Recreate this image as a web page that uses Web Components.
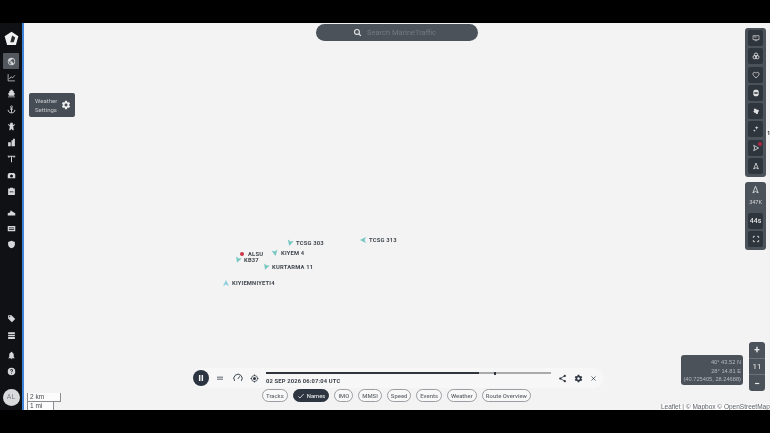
<!DOCTYPE html>
<html>
<head>
<meta charset="utf-8">
<title>MarineTraffic</title>
<style>
  html, body { margin: 0; padding: 0; background: #000; overflow: hidden; }
  body { font-family: Roboto, "Liberation Sans", sans-serif; }
</style>
</head>
<body>
<mt-app></mt-app>
<script>
const ICONS = {
  logo: '<path d="M12 1 23 8.500 19 22.500H5L1 8.500z" fill="currentColor"/><path d="M13 7 18 10.500 15.500 18H10z" fill="#2a2c30"/>',
  globe: '<path fill="currentColor" d="M12 2C6.48 2 2 6.48 2 12s4.48 10 10 10 10-4.48 10-10S17.52 2 12 2zm-1 17.93c-3.95-.49-7-3.85-7-7.93 0-.62.08-1.21.21-1.79L9 15v1c0 1.1.9 2 2 2v1.93zm6.9-2.54c-.26-.81-1-1.39-1.9-1.39h-1v-3c0-.55-.45-1-1-1H8v-2h2c.55 0 1-.45 1-1V7h2c1.1 0 2-.9 2-2v-.41c2.93 1.19 5 4.06 5 7.41 0 2.08-.8 3.97-2.1 5.39z"/>',
  chart: '<path fill="none" stroke="currentColor" stroke-width="2" d="M3 3v18h18M6 16l5-6 4 3 6-7"/>',
  boat: '<path fill="currentColor" d="M9 2h6v3h3v5l3 1-2 7H5l-2-7 3-1V5h3zM3 20h18v2H3z"/>',
  anchor: '<path fill="none" stroke="currentColor" stroke-width="2.400" d="M12 7v14M8 11h8M3 13c0 5 4 8 9 8s9-3 9-8"/><circle cx="12" cy="5" r="2.600" fill="none" stroke="currentColor" stroke-width="2"/>',
  tower: '<path fill="currentColor" d="M9 2h6l1 6 5-3v3l-4.500 3L18 22h-3l-3-4-3 4H6l1.500-11L3 8V5l5 3z"/>',
  port: '<path fill="currentColor" d="M3 11h7v11H3zM12 6h4V2h5v20h-9z"/>',
  antenna: '<path fill="none" stroke="currentColor" stroke-width="2.600" d="M2 6h20M12 6v16M5 6v4M19 6v4"/>',
  cam: '<path fill="currentColor" d="M5 5h14l3 4v10H2V9zm7 4a4 4 0 1 0 0 8 4 4 0 0 0 0-8z"/>',
  album: '<path fill="currentColor" d="M3 4h18v17H3zM8 2h8v3H8z"/><path fill="#101114" d="M7 12h10v2H7z"/>',
  land: '<path fill="currentColor" d="M2 20v-6l6-2 2-6 4 3 8 5v6z"/>',
  card: '<path fill="currentColor" fill-rule="evenodd" d="M2 5h20v14H2zM5 9v2h14V9zm0 4v2h14v-2z"/>',
  shield: '<path fill="currentColor" d="M12 2l9 3v7c0 5-4 9-9 10-5-1-9-5-9-10V5z"/>',
  tag: '<path fill="currentColor" d="M3 3h9l10 10-9 9L3 12zm4 2.500a1.500 1.500 0 1 0 0 3 1.500 1.500 0 0 0 0-3z"/>',
  rows: '<path fill="currentColor" d="M3 3h18v5H3zM3 10h18v4H3zM3 16h18v5H3z"/>',
  bell: '<path fill="currentColor" d="M12 2a2 2 0 0 1 2 2c3 1 4 4 4 7v5l3 3H3l3-3v-5c0-3 1-6 4-7a2 2 0 0 1 2-2zM10 20h4a2 2 0 0 1-4 0z"/>',
  help: '<path fill="currentColor" fill-rule="evenodd" d="M12 2a10 10 0 1 1 0 20 10 10 0 0 1 0-20zm-1 14v2h2v-2zm1-10c-2.200 0-4 1.500-4 3.500h2c0-1 .9-1.700 2-1.700s2 .6 2 1.500c0 1.800-3 1.600-3 5h2c0-2.400 3-2.700 3-5.200C16 7.500 14.200 6 12 6z"/>',
  gear: '<path fill="currentColor" d="M19.430 12.980c.04-.32.07-.64.07-.98s-.03-.66-.07-.98l2.110-1.650c.19-.15.24-.42.12-.64l-2-3.460c-.12-.22-.39-.3-.61-.22l-2.490 1c-.52-.4-1.080-.73-1.690-.98l-.38-2.650C14.460 2.180 14.250 2 14 2h-4c-.25 0-.46.18-.49.420l-.38 2.650c-.61.25-1.170.59-1.690.98l-2.490-1c-.23-.09-.49 0-.61.22l-2 3.460c-.13.22-.07.49.12.64l2.110 1.650c-.04.32-.07.65-.07.98s.03.66.07.98l-2.110 1.650c-.19.15-.24.42-.12.64l2 3.460c.12.22.39.3.61.22l2.490-1c.52.4 1.080.73 1.690.98l.38 2.650c.03.24.24.42.49.42h4c.25 0 .46-.18.49-.42l.38-2.650c.61-.25 1.170-.59 1.690-.98l2.490 1c.23.09.49 0 .61-.22l2-3.460c.12-.22.07-.49-.12-.64l-2.110-1.650zM12 15.500c-1.930 0-3.500-1.570-3.500-3.500s1.570-3.500 3.500-3.500 3.500 1.570 3.500 3.500-1.570 3.500-3.500 3.500z"/>',
  search: '<circle cx="10.500" cy="10.500" r="6.500" fill="none" stroke="currentColor" stroke-width="3"/><path d="M15.500 15.500 21 21" stroke="currentColor" stroke-width="3.400"/>',
  screen: '<path fill="none" stroke="currentColor" stroke-width="2" d="M3 5h18v12H3zM8 20h8"/><path fill="currentColor" d="M6 8h8v2H6z"/>',
  rings: '<g fill="none" stroke="currentColor" stroke-width="2.600"><circle cx="12" cy="8" r="5"/><circle cx="8" cy="15.500" r="5"/><circle cx="16" cy="15.500" r="5"/></g>',
  heart: '<path fill="none" stroke="currentColor" stroke-width="2.400" d="M12 20.500C5 15 3 12 3 8.500 3 6 5 4 7.500 4c1.800 0 3.500 1 4.500 2.700C13 5 14.700 4 16.500 4 19 4 21 6 21 8.500c0 3.500-2 6.500-9 12z"/>',
  pack: '<path fill="currentColor" fill-rule="evenodd" d="M8 2h8l4 4v12l-4 4H8l-4-4V6zm-1 7v2h10V9zm0 4v2h10v-2z"/>',
  wind: '<path fill="currentColor" d="M5 5h7l2 3h5l2 4-3 3v5l-5 1-3-4H7l-3-4 3-3z"/>',
  spark: '<path fill="currentColor" d="M14 3l1.500 4L20 8.500 15.500 10 14 14l-1.500-4L8 8.500 12.500 7zM7 13l1 3 3 1-3 1-1 3-1-3-3-1 3-1z"/>',
  play: '<path fill="none" stroke="currentColor" stroke-width="2.400" stroke-linejoin="round" d="M5 4l15 8-15 8 3-8z"/>',
  north: '<path fill="none" stroke="currentColor" stroke-width="2.400" stroke-linejoin="round" d="M12 3 5 21l7-4 7 4z"/>',
  full: '<path fill="none" stroke="currentColor" stroke-width="2.400" d="M4 9V4h5M15 4h5v5M20 15v5h-5M9 20H4v-5"/>',
  equals: '<path fill="currentColor" d="M3 8h18v2.600H3zM3 14h18v2.600H3z"/>',
  gauge: '<path fill="none" stroke="currentColor" stroke-width="2.200" d="M4 19a10 10 0 1 1 16 0M12 14l4-6"/>',
  target: '<circle cx="12" cy="12" r="8" fill="none" stroke="currentColor" stroke-width="2"/><circle cx="12" cy="12" r="4" fill="currentColor"/><path stroke="currentColor" stroke-width="2" d="M12 1v4M12 19v4M1 12h4M19 12h4"/>',
  share: '<path fill="none" stroke="currentColor" stroke-width="2.200" d="M18 5 6 12l12 7"/><circle cx="18" cy="5" r="3" fill="currentColor"/><circle cx="6" cy="12" r="3" fill="currentColor"/><circle cx="18" cy="19" r="3" fill="currentColor"/>',
  close: '<path stroke="currentColor" stroke-width="2.400" d="M5 5l14 14M19 5 5 19"/>',
  check: '<path fill="none" stroke="currentColor" stroke-width="2.600" d="M4 13l5 5L20 6"/>',
  pause: '<path fill="currentColor" d="M7 5h3.600v14H7zM13.400 5H17v14h-3.600z"/>'
};

class MtIcon extends HTMLElement {
  connectedCallback() {
    const size = this.getAttribute('size') || 9;
    this.attachShadow({mode: 'open'}).innerHTML = `
      <style>
        :host { display: inline-flex; align-items: center; justify-content: center; flex: none; }
        svg { display: block; }
      </style>
      <svg xmlns="http://www.w3.org/2000/svg" viewBox="0 0 24 24" width="${size}" height="${size}">${ICONS[this.getAttribute('name')] || ''}</svg>`;
  }
}

class MtNavItem extends HTMLElement {
  connectedCallback() {
    const active = this.hasAttribute('active');
    this.attachShadow({mode: 'open'}).innerHTML = `
      <style>
        :host { display: flex; align-items: center; justify-content: center; width: 16px; height: 16px; border-radius: 1px; color: #d6d7d9; background: ${active ? '#53585f' : 'transparent'}; }
      </style>
      <mt-icon name="${this.getAttribute('icon')}" size="9"></mt-icon>`;
  }
}

class MtSidebar extends HTMLElement {
  connectedCallback() {
    const item = (n, a) => `<mt-nav-item icon="${n}" ${a ? 'active' : ''}></mt-nav-item>`;
    this.attachShadow({mode: 'open'}).innerHTML = `
      <style>
        :host { display: flex; flex-direction: column; align-items: center; flex: none; width: 24px; padding-top: 7px; box-sizing: border-box; background: #101114; border-right: 2px solid #3f83d8; }
        .logo { color: #f2f2f2; height: 16px; margin-bottom: 7px; display: flex; }
        .group { display: flex; flex-direction: column; gap: .3px; align-items: center; }
        .g2 { margin-top: 5px; }
        .g3 { margin-top: 58px; }
        .g4 { margin-top: 4px; }
        .avatar { margin-top: 9px; width: 17px; height: 17px; border-radius: 50%; background: #d9dadc; color: #7b7f85; font-size: 7px; display: flex; align-items: center; justify-content: center; }
      </style>
      <div class="logo"><mt-icon name="logo" size="15"></mt-icon></div>
      <div class="group">${item('globe', 1)}${item('chart')}${item('boat')}${item('anchor')}${item('tower')}${item('port')}${item('antenna')}${item('cam')}${item('album')}</div>
      <div class="group g2">${item('land')}${item('card')}${item('shield')}</div>
      <div class="group g3">${item('tag')}${item('rows')}</div>
      <div class="group g4">${item('bell')}${item('help')}</div>
      <div class="avatar">AL</div>`;
  }
}

class MtSearch extends HTMLElement {
  connectedCallback() {
    this.attachShadow({mode: 'open'}).innerHTML = `
      <style>
        :host { position: absolute; left: 292px; top: 1px; width: 162px; height: 17px; box-sizing: border-box; padding-right: 5px; border-radius: 9px; background: #4b525a; display: flex; align-items: center; justify-content: center; gap: 5px; color: #747a81; font-size: 7.500px; }
        mt-icon { color: #e2e4e6; }
      </style>
      <mt-icon name="search" size="9"></mt-icon><span>Search MarineTraffic</span>`;
  }
}

class MtTip extends HTMLElement {
  connectedCallback() {
    this.attachShadow({mode: 'open'}).innerHTML = `
      <style>
        :host { position: absolute; left: 5px; top: 70px; width: 46px; height: 24px; box-sizing: border-box; padding: 0 4px 0 6px; border-radius: 2px; background: #474d55; color: #c6c9cc; font-size: 6px; line-height: 9px; display: flex; align-items: center; justify-content: space-between; }
        mt-icon { color: #eceded; }
      </style>
      <span>Weather<br>Settings</span><mt-icon name="gear" size="10"></mt-icon>`;
  }
}

class MtToolBtn extends HTMLElement {
  connectedCallback() {
    this.attachShadow({mode: 'open'}).innerHTML = `
      <style>
        :host { display: flex; align-items: center; justify-content: center; width: 15px; height: 16px; border-radius: 2px; background: #2f353c; color: #dfe1e3; font-size: 7px; font-weight: 500; }
      </style>
      <slot></slot>`;
  }
}

class MtRightRail extends HTMLElement {
  connectedCallback() {
    const b = n => `<mt-tool-btn><mt-icon name="${n}" size="8"></mt-icon></mt-tool-btn>`;
    this.attachShadow({mode: 'open'}).innerHTML = `
      <style>
        :host { position: absolute; right: 4px; top: 5px; width: 21px; display: flex; flex-direction: column; gap: 4.500px; }
        .panel { background: #4b525a; border-radius: 3px; padding: 2px 0 3px; display: flex; flex-direction: column; align-items: center; gap: 2.300px; }
        .north { color: #d8dadc; font-size: 5.500px; display: flex; flex-direction: column; align-items: center; gap: 5px; padding: 1px 0 6px; }
        .badge { position: relative; display: flex; }
        .dot { position: absolute; right: -2px; top: -2px; width: 4px; height: 4px; border-radius: 50%; background: #b5243f; }
      </style>
      <div class="panel">
        ${b('screen')}${b('rings')}${b('heart')}${b('pack')}${b('wind')}${b('spark')}
        <mt-tool-btn><span class="badge"><mt-icon name="play" size="8"></mt-icon><span class="dot"></span></span></mt-tool-btn>
        ${b('north')}
      </div>
      <div class="panel">
        <div class="north"><mt-icon name="north" size="9"></mt-icon><span>347K</span></div>
        <mt-tool-btn>44s</mt-tool-btn>
        ${b('full')}
      </div>`;
  }
}

class MtVessel extends HTMLElement {
  connectedCallback() {
    const rot = this.getAttribute('rot') || 0;
    const kind = this.getAttribute('kind');
    const color = this.getAttribute('color') || '#72c6bf';
    const mark = kind === 'dot'
      ? `<span class="dot"></span>`
      : `<svg width="6" height="6" viewBox="0 0 10 10" style="transform:rotate(${rot}deg)"><path d="M5 0 10 10 5 7.500 0 10z" fill="${color}"/></svg>`;
    this.style.left = this.getAttribute('x') + 'px';
    this.style.top = this.getAttribute('y') + 'px';
    this.attachShadow({mode: 'open'}).innerHTML = `
      <style>
        :host { position: absolute; display: flex; align-items: center; height: 8px; color: #41474e; font-size: 5.800px; font-weight: 700; letter-spacing: .2px; white-space: nowrap; }
        .m { width: 7px; height: 7px; display: flex; align-items: center; justify-content: center; margin-right: var(--gap, 3px); }
        .dot { width: 4px; height: 4px; border-radius: 50%; background: #c9384a; }
      </style>
      <span class="m">${mark}</span><slot></slot>`;
  }
}

class MtChip extends HTMLElement {
  connectedCallback() {
    const on = this.hasAttribute('on');
    this.attachShadow({mode: 'open'}).innerHTML = `
      <style>
        :host { display: inline-flex; align-items: center; justify-content: center; gap: 2px; box-sizing: border-box; height: 13px; padding: 0 3px; border-radius: 7px; border: 1px solid ${on ? '#2c3540' : '#9a9da1'}; background: ${on ? '#2c3540' : '#f8f8f8'}; color: ${on ? '#dfe2e5' : '#676b70'}; font-size: 5.900px; font-weight: 500; white-space: nowrap; }
      </style>
      ${on ? '<mt-icon name="check" size="8"></mt-icon>' : ''}<slot></slot>`;
  }
}

class MtPlayer extends HTMLElement {
  connectedCallback() {
    this.attachShadow({mode: 'open'}).innerHTML = `
      <style>
        :host { position: absolute; left: 168px; top: 345px; display: flex; flex-direction: column; align-items: flex-start; color: #2c3540; }
        .bar { display: flex; align-items: center; width: 412px; height: 20px; border-radius: 10px; background: #f7f7f7; box-sizing: border-box; }
        .pause { width: 16px; height: 16px; margin-left: 1px; border-radius: 50%; background: #2b3440; color: #f2f2f2; display: flex; align-items: center; justify-content: center; }
        .eq { margin-left: 7px; }
        .gauge { margin-left: 9px; }
        .target { margin-left: 7px; }
        .track { width: 285px; margin-left: 7px; display: flex; flex-direction: column; gap: 2.500px; padding-top: 1px; }
        .line { height: 2px; position: relative; background: linear-gradient(90deg, #30353b 0 213px, #a9abad 213px); }
        .tick { position: absolute; left: 228px; top: -.5px; width: 2px; height: 3px; background: #30353b; }
        .time { font-size: 5.800px; font-weight: 700; letter-spacing: .16px; line-height: 8px; color: #3a4048; }
        .end { display: flex; margin-left: 7px; gap: 7px; align-items: center; }
        .chips { display: flex; gap: 5px; margin: 1px 0 0 70px; }
      </style>
      <div class="bar">
        <span class="pause"><mt-icon name="pause" size="10"></mt-icon></span>
        <mt-icon class="eq" name="equals" size="8"></mt-icon>
        <mt-icon class="gauge" name="gauge" size="10"></mt-icon>
        <mt-icon class="target" name="target" size="9"></mt-icon>
        <div class="track">
          <div class="line"><span class="tick"></span></div>
          <div class="time">02 SEP 2026 06:07:04 UTC</div>
        </div>
        <div class="end">
          <mt-icon name="share" size="9"></mt-icon>
          <mt-icon name="gear" size="9"></mt-icon>
          <mt-icon name="close" size="7"></mt-icon>
        </div>
      </div>
      <div class="chips">
        <mt-chip>Tracks</mt-chip><mt-chip on>Names</mt-chip><mt-chip>IMO</mt-chip><mt-chip>MMSI</mt-chip><mt-chip>Speed</mt-chip><mt-chip>Events</mt-chip><mt-chip>Weather</mt-chip><mt-chip>Route Overview</mt-chip>
      </div>`;
  }
}

class MtScale extends HTMLElement {
  connectedCallback() {
    this.attachShadow({mode: 'open'}).innerHTML = `
      <style>
        :host { position: absolute; left: 3px; bottom: 0; display: flex; flex-direction: column; font-size: 6.500px; color: #45494e; font-family: "Liberation Sans", sans-serif; }
        div { box-sizing: border-box; height: 9px; line-height: 8px; padding-left: 2px; background: rgba(255,255,255,.7); }
        .km { width: 34px; border: 1px solid #8b8d90; border-top: 0; }
        .mi { width: 27px; height: 8px; border-right: 1px solid #8b8d90; border-left: 1px solid #8b8d90; }
      </style>
      <div class="km">2 km</div><div class="mi">1 mi</div>`;
  }
}

class MtMapControls extends HTMLElement {
  connectedCallback() {
    this.attachShadow({mode: 'open'}).innerHTML = `
      <style>
        :host { position: absolute; right: 5px; top: 319px; display: flex; align-items: center; gap: 6px; }
        .coords { width: 62px; height: 30px; box-sizing: border-box; margin-top: 7px; padding: 3px 2px 0 0; border-radius: 3px; background: #4b525a; color: #b4b8bc; font-family: "Liberation Sans", sans-serif; font-size: 5.700px; line-height: 8.500px; text-align: right; white-space: nowrap; }
        .zoom { width: 16px; height: 49px; border-radius: 3px; background: #4b525a; color: #e8e9ea; display: flex; flex-direction: column; font-size: 8px; text-align: center; }
        .zoom span { flex: 1; display: flex; align-items: center; justify-content: center; }
        .zoom span + span { border-top: 1px solid #6b7178; }
        .zoom b { font-size: 10px; font-weight: 700; }
      </style>
      <div class="coords">40° 43.52 N<br>28° 14.81 E<br>(40.725405, 28.24688)</div>
      <div class="zoom"><span><b>+</b></span><span>11</span><span><b>−</b></span></div>`;
  }
}

class MtAttribution extends HTMLElement {
  connectedCallback() {
    this.attachShadow({mode: 'open'}).innerHTML = `
      <style>
        :host { position: absolute; right: 0; bottom: 0; height: 6px; overflow: hidden; width: 109px; background: rgba(255,255,255,.7); color: #5c6066; font-family: "Liberation Sans", sans-serif; font-size: 6.500px; line-height: 6px; white-space: nowrap; }
      </style>
      Leaflet | © Mapbox © OpenStreetMap`;
  }
}

class MtMap extends HTMLElement {
  connectedCallback() {
    this.attachShadow({mode: 'open'}).innerHTML = `
      <style>
        :host { position: relative; display: block; flex: 1; background: #f3f3f3; overflow: hidden; }
        .cut { position: absolute; right: 0; top: 107px; font-size: 5px; font-weight: 700; color: #222; }
      </style>
      <mt-vessel x="262" y="216" rot="195">TCSG 303</mt-vessel>
      <mt-vessel x="247" y="226" rot="170">KIYEM 4</mt-vessel>
      <mt-vessel x="214" y="226.500" kind="dot" style="--gap:3px">ALSU</mt-vessel>
      <mt-vessel x="210" y="233" rot="200">KB37</mt-vessel>
      <mt-vessel x="238" y="240" rot="200">KURTARMA 11</mt-vessel>
      <mt-vessel x="198" y="256" rot="0" color="#8ecfe0">KIYIEMNIYETI4</mt-vessel>
      <mt-vessel x="335" y="213" rot="-90">TCSG 313</mt-vessel>
      <mt-search></mt-search>
      <mt-tip></mt-tip>
      <mt-right-rail></mt-right-rail>
      <span class="cut">1</span>
      <mt-player></mt-player>
      <mt-map-controls></mt-map-controls>
      <mt-scale></mt-scale>
      <mt-attribution></mt-attribution>`;
  }
}

class MtApp extends HTMLElement {
  connectedCallback() {
    this.attachShadow({mode: 'open'}).innerHTML = `
      <style>
        :host { display: flex; flex-direction: column; width: 770px; height: 433px; background: #000; font-family: Roboto, "Liberation Sans", sans-serif; filter: blur(.5px); }
        .main { display: flex; height: 387px; margin-top: 23px; }
      </style>
      <div class="main"><mt-sidebar></mt-sidebar><mt-map></mt-map></div>`;
  }
}

customElements.define('mt-icon', MtIcon);
customElements.define('mt-nav-item', MtNavItem);
customElements.define('mt-sidebar', MtSidebar);
customElements.define('mt-search', MtSearch);
customElements.define('mt-tip', MtTip);
customElements.define('mt-tool-btn', MtToolBtn);
customElements.define('mt-right-rail', MtRightRail);
customElements.define('mt-vessel', MtVessel);
customElements.define('mt-chip', MtChip);
customElements.define('mt-player', MtPlayer);
customElements.define('mt-scale', MtScale);
customElements.define('mt-map-controls', MtMapControls);
customElements.define('mt-attribution', MtAttribution);
customElements.define('mt-map', MtMap);
customElements.define('mt-app', MtApp);
</script>
</body>
</html>
